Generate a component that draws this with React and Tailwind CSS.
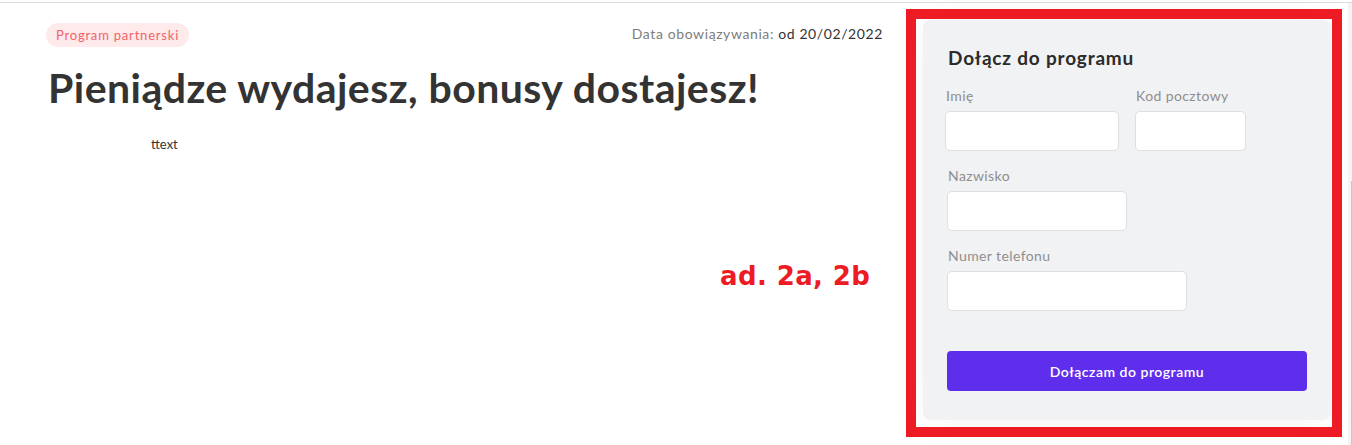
import React from 'react';

const Field = ({ label, width }) => (
  <div className="flex flex-col">
    <label className="text-[14px] leading-[18px] text-[#8e8e8e] pl-[1px] tracking-[0.4px]">{label}</label>
    <input type="text" className={`mt-[6px] h-[40px] ${width} bg-white border border-[#dedfe2] rounded-[5px]`} />
  </div>
);

const App = () => {
  return (
    <div className="relative w-[1352px] h-[445px] bg-white pt-[2px] overflow-hidden font-['Lato',sans-serif]">
      <div className="flex h-full border-t border-[#dcdcdc]">
        <main className="w-[923px] shrink-0 pl-[46px] pr-[40px] pt-[20px]">
          <div className="flex items-center justify-between">
            <span className="h-[24px] px-[10px] rounded-full bg-[#feeaea] text-[#f0626c] text-[13px] leading-[24px] tracking-[0.8px]">
              Program partnerski
            </span>
            <span className="text-[14px] text-[#7d7d7d] mt-[-4px] tracking-[0.6px]">
              Data obowiązywania: <span className="text-[#333]">od 20/02/2022</span>
            </span>
          </div>
          <h1 className="mt-[17px] pl-[2px] text-[41px] leading-[48px] font-bold text-[#333] tracking-[0.45px]">
            Pieniądze wydajesz, bonusy dostajesz!
          </h1>
          <p className="mt-[23px] ml-[105px] text-[13px] text-[#333]">ttext</p>
        </main>

        <aside className="w-[408px] shrink-0 pt-[17px]">
          <div className="h-[400px] rounded-[8px] bg-[#f1f2f4] shadow-[0_0_40px_rgba(0,0,0,0.05)] px-[22px] pt-[26px]">
            <h2 className="pl-[3px] text-[19px] leading-[24px] font-bold text-[#2b2b2b] tracking-[0.8px]">Dołącz do programu</h2>
            <div className="mt-[17px] flex gap-[16px]">
              <Field label="Imię" width="w-[174px]" />
              <Field label="Kod pocztowy" width="w-[111px]" />
            </div>
            <div className="mt-[16px] pl-[2px]">
              <Field label="Nazwisko" width="w-[180px]" />
            </div>
            <div className="mt-[16px] pl-[2px]">
              <Field label="Numer telefonu" width="w-[240px]" />
            </div>
            <button className="mt-[40px] ml-[2px] w-[360px] h-[40px] rounded-[4px] bg-[#5f2dec] text-white text-[14px] font-semibold tracking-[0.5px]">
              Dołączam do programu
            </button>
          </div>
        </aside>

        <div className="ml-auto w-[4px] bg-[#f4f4f4] flex flex-col">
          <div className="mt-[178px] flex-1 border-r border-[#c8c8c8]" />
        </div>
      </div>

      {/* annotation overlay */}
      <div className="absolute left-[906px] top-[9px] w-[436px] h-[428px] border-[10px] border-[#ed1c24] pointer-events-none" />
      <div className="absolute left-[720px] top-[257px] text-[26px] font-bold text-[#ed1c24] font-['DejaVu_Sans',sans-serif] tracking-[0.4px]">
        ad. 2a, 2b
      </div>
    </div>
  );
};

export default App;
